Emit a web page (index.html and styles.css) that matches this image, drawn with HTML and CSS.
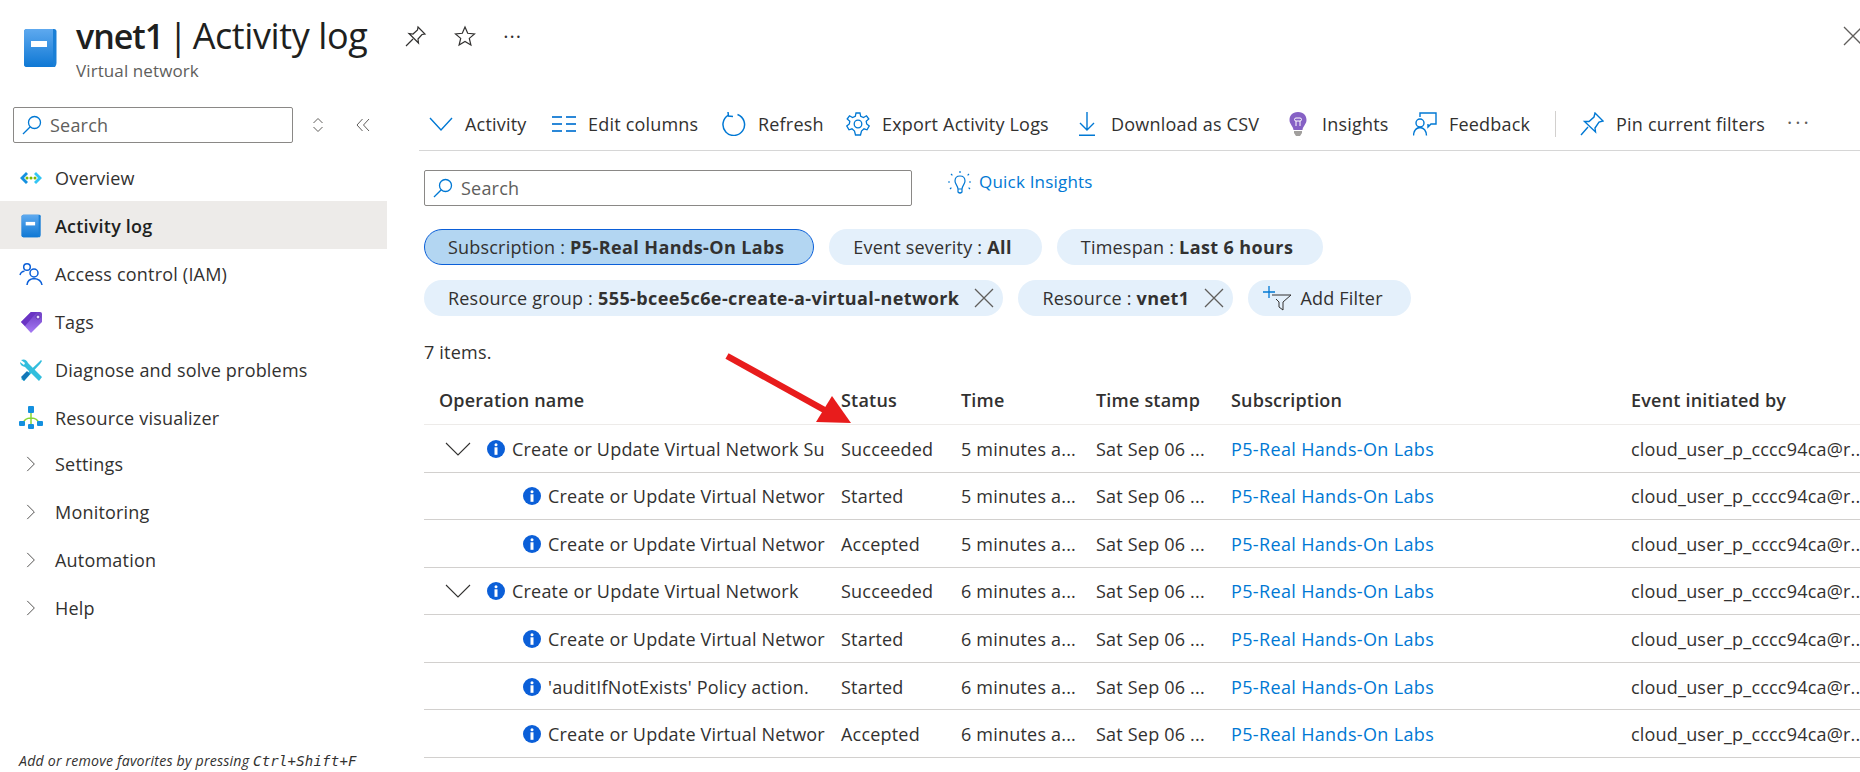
FILE: index.html
```html
<!DOCTYPE html>
<html lang="en">
<head>
  <meta charset="UTF-8">
  <title>vnet1 | Activity log</title>
  <link rel="stylesheet" href="styles.css">
</head>
<body>
  <svg class="defs" width="0" height="0">
    <defs>
      <linearGradient id="bookFill" x1="0" y1="0" x2="0" y2="1">
        <stop offset="0" stop-color="#5ea9ef"/>
        <stop offset="1" stop-color="#0f78d4"/>
      </linearGradient>
      <linearGradient id="tagFill" x1="0" y1="0" x2="0" y2="1">
        <stop offset="0" stop-color="#6f3fc4"/>
        <stop offset="1" stop-color="#a67af4"/>
      </linearGradient>
      <symbol id="book" viewBox="0 0 34 40">
        <path d="M1 4 Q1 1 4 1 H31 Q33.500 1 33.500 3.500 V35 Q33.500 37 32 39 H4 Q1 39 1 36 Z" fill="#1a7fd6"/>
        <path d="M1 4 Q1 1 4 1 H30 V37 Q30 39 28 39 H4 Q1 39 1 36 Z" fill="url(#bookFill)"/>
        <rect x="8" y="13" width="16" height="6" fill="#fff"/>
      </symbol>
      <symbol id="search" viewBox="0 0 20 20">
        <circle cx="12.500" cy="7.500" r="6" fill="none" stroke="#0078d4" stroke-width="1.300"/>
        <path d="M8.300 11.700 L1 19" fill="none" stroke="#0078d4" stroke-width="1.300"/>
      </symbol>
      <symbol id="info" viewBox="0 0 18 18">
        <circle cx="9" cy="9" r="9" fill="#0b5fd8"/>
        <circle cx="9" cy="4.800" r="1.500" fill="#fff"/>
        <rect x="7.500" y="7.300" width="3" height="7.500" fill="#fff"/>
      </symbol>
      <symbol id="chev" viewBox="0 0 12 20">
        <path d="M1.500 1.500 L10 10 L1.500 18.500" fill="none" stroke="#323130" stroke-width="1"/>
      </symbol>
      <symbol id="down" viewBox="0 0 26 14">
        <path d="M1 1 L13 13 L25 1" fill="none" stroke="#323130" stroke-width="1.100"/>
      </symbol>
      <symbol id="cross" viewBox="0 0 20 20">
        <path d="M1 1 L19 19 M19 1 L1 19" fill="none" stroke="#605e5c" stroke-width="1.300"/>
      </symbol>
    </defs>
  </svg>

  <header class="blade-head">
    <svg class="head-icon"><use href="#book"/></svg>
    <div class="head-titles">
      <h1><b>vnet1</b><span>|</span><span>Activity log</span></h1>
      <p>Virtual network</p>
    </div>
    <div class="head-actions">
      <svg width="22" height="22" viewBox="0 0 22 22" fill="none" stroke="#323130" stroke-width="1.200"><path d="M1 21 L8 14 M13 2 L20 9 L17 9.500 L13 14 L13.500 18 L4 8.500 L8 9 L12.500 5 Z"/></svg>
      <svg width="22" height="22" viewBox="0 0 22 22" fill="none" stroke="#323130" stroke-width="1.200"><path d="M11 2 L13.700 8.300 L20.500 8.900 L15.300 13.400 L16.900 20 L11 16.500 L5.100 20 L6.700 13.400 L1.500 8.900 L8.300 8.300 Z"/></svg>
      <span class="dots">&middot;&middot;&middot;</span>
    </div>
    <svg class="head-close" width="20" height="20"><use href="#cross"/></svg>
  </header>

  <div class="blade-body">
    <nav class="sidebar">
      <div class="side-tools">
        <div class="search-box side-search">
          <svg class="search-icon"><use href="#search"/></svg>
          <span>Search</span>
        </div>
        <svg width="14" height="18" viewBox="0 0 14 18" fill="none" stroke="#605e5c"><path d="M2.500 7 L7 2.500 L11.500 7 M2.500 11 L7 15.500 L11.500 11"/></svg>
        <svg width="14" height="14" viewBox="0 0 14 14" fill="none" stroke="#605e5c"><path d="M6.500 1 L1 7 L6.500 13 M13 1 L7.500 7 L13 13"/></svg>
      </div>
      <ul class="side-list">
        <li class="side-item">
          <svg class="side-icon" viewBox="0 0 24 24"><path d="M7 6 L1 12 L7 18 L9 16 L5 12 L9 8 Z" fill="#1490df"/><path d="M17 6 L23 12 L17 18 L15 16 L19 12 L15 8 Z" fill="#32c5f4"/><circle cx="8" cy="12" r="1.500" fill="#7fba00"/><circle cx="12" cy="12" r="1.500" fill="#7fba00"/><circle cx="16" cy="12" r="1.500" fill="#7fba00"/></svg>
          Overview
        </li>
        <li class="side-item active">
          <svg class="side-icon" viewBox="0 0 24 24"><use href="#book" x="2" y="0" width="20" height="24"/></svg>
          Activity log
        </li>
        <li class="side-item">
          <svg class="side-icon" viewBox="0 0 24 24" fill="none" stroke="#0b5fd8" stroke-width="1.500"><circle cx="8" cy="5" r="3.300"/><path d="M1 13 Q2 9.500 5.500 9.300"/><circle cx="15" cy="11" r="4"/><path d="M8 23 Q8.500 17 15 16.500 Q22 17 23 23"/></svg>
          Access control (IAM)
        </li>
        <li class="side-item">
          <svg class="side-icon" viewBox="0 0 24 24"><path d="M2 12 L12 2 H21 Q23 2 23 4 V12 L12 23 Z" fill="url(#tagFill)"/><path d="M2 12 L12 2 H18 L6 16 Z" fill="#6a34c4"/><circle cx="19" cy="7" r="2" fill="#e8dcff" stroke="#5c2dae"/></svg>
          Tags
        </li>
        <li class="side-item">
          <svg class="side-icon" viewBox="0 0 24 24"><path d="M2 21 L20 4 L22 2 L23 3 L21 6 L5 23 Z" fill="#32bedd"/><path d="M2 19 L8 13 L11 16 L5 23 Z" fill="#1277b8"/><path d="M2 2 Q7 0 9 5 L23 19 L20 23 L6 9 Q1 8 1 4 L5 7 L6 5 Z" fill="#32bedd"/></svg>
          Diagnose and solve problems
        </li>
        <li class="side-item side-last">
          <svg class="side-icon" viewBox="0 0 24 24"><path d="M12 7 V19 M4 18 Q5 12 12 12 Q19 12 20 18" fill="none" stroke="#86d633" stroke-width="1.500"/><rect x="9" y="0" width="6" height="7" rx="1" fill="#1490df"/><rect x="0" y="15" width="6" height="5" rx="1" fill="#1490df"/><rect x="18" y="15" width="6" height="5" rx="1" fill="#1490df"/><rect x="9" y="18" width="6" height="5" rx="1" fill="#1490df"/></svg>
          Resource visualizer
        </li>
        <li class="side-item group"><svg class="side-chev"><use href="#chev"/></svg>Settings</li>
        <li class="side-item group"><svg class="side-chev"><use href="#chev"/></svg>Monitoring</li>
        <li class="side-item group"><svg class="side-chev"><use href="#chev"/></svg>Automation</li>
        <li class="side-item group"><svg class="side-chev"><use href="#chev"/></svg>Help</li>
      </ul>
      <p class="side-foot">Add or remove favorites by pressing <kbd>Ctrl+Shift+F</kbd></p>
    </nav>

    <main class="content">
      <div class="toolbar">
        <div class="tool">
          <svg class="tool-icon" viewBox="0 0 24 24" fill="none" stroke="#0078d4" stroke-width="1.400"><path d="M1 6 L12 18 L23 6"/></svg>
          Activity
        </div>
        <div class="tool">
          <svg class="tool-icon" viewBox="0 0 24 24" stroke="#2b88d8" stroke-width="2"><path d="M0 5 H10 M14 5 H24 M0 12 H10 M14 12 H24 M0 19 H10 M14 19 H24"/></svg>
          Edit columns
        </div>
        <div class="tool">
          <svg class="tool-icon" viewBox="0 0 24 24" fill="none" stroke="#0078d4" stroke-width="1.500"><path d="M15.500 2.500 A10.800 10.800 0 1 1 6.500 3.200"/><path d="M6 0 L6.500 4 L11 4.500"/></svg>
          Refresh
        </div>
        <div class="tool">
          <svg class="tool-icon" viewBox="0 0 24 24" fill="none" stroke="#0078d4" stroke-width="1.300"><circle cx="12" cy="12" r="3.800"/><path d="M10 1 H14 L14.700 4.300 L17.500 5.500 L20.500 3.800 L22.800 7 L20.200 9.200 L20.700 12 L23.200 14 L21 17.800 L18 16.800 L15.500 19 L14.500 23 H9.500 L8.500 19 L6 16.800 L3 17.800 L0.800 14 L3.300 12 L3.800 9.200 L1.200 7 L3.500 3.800 L6.500 5.500 L9.300 4.300 Z"/></svg>
          Export Activity Logs
        </div>
        <div class="tool">
          <svg class="tool-icon" viewBox="0 0 24 24" fill="none" stroke="#0078d4" stroke-width="1.400"><path d="M12 0 V18 M5 11 L12 18 L19 11 M4 23.300 H20"/></svg>
          Download as CSV
        </div>
        <div class="tool">
          <svg class="tool-icon" viewBox="0 0 24 24"><path d="M12 0 C6 0 3.500 4 3.500 8 C3.500 12 7 14 7.500 18 H16.500 C17 14 20.500 12 20.500 8 C20.500 4 18 0 12 0 Z" fill="#8661c5"/><path d="M8 19 H16 V21 L14 24 H10 L8 21 Z" fill="#a19f9d"/><path d="M10 9 V14 M14 9 V14 M10 9 A1.500 1.500 0 1 1 10 6 H14 A1.500 1.500 0 1 1 14 9 Z" fill="none" stroke="#fff"/></svg>
          Insights
        </div>
        <div class="tool">
          <svg class="tool-icon" viewBox="0 0 24 24" fill="none" stroke="#0078d4" stroke-width="1.400"><path d="M7 5 V1 H23 V12 H18 L15 15 V12"/><circle cx="7" cy="11" r="4"/><path d="M0.500 23.500 Q1 16 7 15.500 Q13 16 13.500 23.500"/></svg>
          Feedback
        </div>
        <div class="tool-sep"></div>
        <div class="tool">
          <svg class="tool-icon" viewBox="0 0 24 24" fill="none" stroke="#0078d4" stroke-width="1.400"><path d="M1 23 L8 15 M15 1 L23 9 L19 10 L15 16 L15.500 20 L4.500 9.500 L9 9.500 L14 5 Z"/></svg>
          Pin current filters
        </div>
        <span class="dots tool-more">&middot;&middot;&middot;</span>
      </div>

      <div class="panel">
        <div class="search-row">
          <div class="search-box main-search">
            <svg class="search-icon"><use href="#search"/></svg>
            <span>Search</span>
          </div>
          <a class="quick-link">
            <svg width="26" height="26" viewBox="0 0 26 26" fill="none" stroke="#0078d4" stroke-width="1.200"><path d="M13 6 C9.500 6 8 8.500 8 11 C8 14 10.500 15 11 19 H15 C15.500 15 18 14 18 11 C18 8.500 16.500 6 13 6 Z M11 19 V22 Q13 24 15 22 V19"/><path stroke-dasharray="2 2" d="M13 1 V4 M4 4 L6 6 M22 4 L20 6 M1 12 H4 M22 12 H25 M3 19 L5 17 M23 19 L21 17"/></svg>
            <span>Quick Insights</span>
          </a>
        </div>

        <div class="chip-row">
          <span class="chip selected">Subscription : <b>P5-Real Hands-On Labs</b></span>
          <span class="chip">Event severity : <b>All</b></span>
          <span class="chip">Timespan : <b>Last 6 hours</b></span>
        </div>
        <div class="chip-row">
          <span class="chip closable">Resource group : <b>555-bcee5c6e-create-a-virtual-network</b><svg class="chip-x"><use href="#cross"/></svg></span>
          <span class="chip closable">Resource : <b>vnet1</b><svg class="chip-x"><use href="#cross"/></svg></span>
          <span class="chip add-chip">
            <svg width="30" height="26" viewBox="0 0 30 26" fill="none" stroke="#0078d4" stroke-width="1.300"><path d="M6 1 V13 M0 7 H12"/><path d="M9 10 H28 L20 17 V25 L16 22 V17 L13 14" stroke="#323130" stroke-width="1"/></svg>
            Add Filter
          </span>
        </div>

        <p class="count">7 items.</p>

        <div class="log-table">
          <div class="log-row log-head">
            <div>Operation name</div><div>Status</div><div>Time</div><div>Time stamp</div><div>Subscription</div><div>Event initiated by</div>
          </div>
          <div class="log-row">
            <div class="op parent"><svg class="op-toggle"><use href="#down"/></svg><svg class="op-info"><use href="#info"/></svg><span>Create or Update Virtual Network Su</span></div>
            <div>Succeeded</div><div>5 minutes a...</div><div>Sat Sep 06 ...</div><div><a class="sub-link">P5-Real Hands-On Labs</a></div><div>cloud_user_p_cccc94ca@r..</div>
          </div>
          <div class="log-row">
            <div class="op child"><svg class="op-info"><use href="#info"/></svg><span>Create or Update Virtual Networ</span></div>
            <div>Started</div><div>5 minutes a...</div><div>Sat Sep 06 ...</div><div><a class="sub-link">P5-Real Hands-On Labs</a></div><div>cloud_user_p_cccc94ca@r..</div>
          </div>
          <div class="log-row">
            <div class="op child"><svg class="op-info"><use href="#info"/></svg><span>Create or Update Virtual Networ</span></div>
            <div>Accepted</div><div>5 minutes a...</div><div>Sat Sep 06 ...</div><div><a class="sub-link">P5-Real Hands-On Labs</a></div><div>cloud_user_p_cccc94ca@r..</div>
          </div>
          <div class="log-row">
            <div class="op parent"><svg class="op-toggle"><use href="#down"/></svg><svg class="op-info"><use href="#info"/></svg><span>Create or Update Virtual Network</span></div>
            <div>Succeeded</div><div>6 minutes a...</div><div>Sat Sep 06 ...</div><div><a class="sub-link">P5-Real Hands-On Labs</a></div><div>cloud_user_p_cccc94ca@r..</div>
          </div>
          <div class="log-row">
            <div class="op child"><svg class="op-info"><use href="#info"/></svg><span>Create or Update Virtual Networ</span></div>
            <div>Started</div><div>6 minutes a...</div><div>Sat Sep 06 ...</div><div><a class="sub-link">P5-Real Hands-On Labs</a></div><div>cloud_user_p_cccc94ca@r..</div>
          </div>
          <div class="log-row">
            <div class="op child"><svg class="op-info"><use href="#info"/></svg><span>'auditIfNotExists' Policy action.</span></div>
            <div>Started</div><div>6 minutes a...</div><div>Sat Sep 06 ...</div><div><a class="sub-link">P5-Real Hands-On Labs</a></div><div>cloud_user_p_cccc94ca@r..</div>
          </div>
          <div class="log-row">
            <div class="op child"><svg class="op-info"><use href="#info"/></svg><span>Create or Update Virtual Networ</span></div>
            <div>Accepted</div><div>6 minutes a...</div><div>Sat Sep 06 ...</div><div><a class="sub-link">P5-Real Hands-On Labs</a></div><div>cloud_user_p_cccc94ca@r..</div>
          </div>
        </div>
      </div>
    </main>
  </div>

  <!-- red annotation arrow drawn over the table -->
  <svg class="arrow" width="140" height="80" viewBox="0 0 140 80">
    <path d="M3 3 L104 59" stroke="#e81c1c" stroke-width="6.500" fill="none"/>
    <path d="M108 43 L92 69 L127 70 Z" fill="#e81c1c"/>
  </svg>
</body>
</html>
```

FILE: styles.css
```css
* {
  box-sizing: border-box;
}
html,
body {
  margin: 0;
  height: 772px;
  overflow: hidden;
}
body {
  position: relative;
  background: #fff;
  color: #323130;
  font-family: "Open Sans", "Noto Sans", Arial, sans-serif;
  font-size: 18px;
  letter-spacing: 0.2px;
}
.defs {
  position: absolute;
}
b {
  font-weight: 700;
  letter-spacing: 0.4px;
}

/* blade header */
.blade-head {
  display: flex;
  height: 98px;
  padding: 14px 0 0 23px;
  position: relative;
}
.head-icon {
  width: 34px;
  height: 40px;
  margin-top: 14px;
}
.head-titles {
  margin-left: 19px;
}
h1 {
  display: flex;
  align-items: baseline;
  gap: 5px;
  margin: 0;
  font-size: 36px;
  line-height: 44px;
  font-weight: 400;
  color: #201f1e;
  white-space: nowrap;
  letter-spacing: -0.4px;
}
h1 b {
  font-size: 34px;
  font-weight: 600;
  letter-spacing: -1px;
}
.head-titles p {
  margin: 1px 0 0;
  font-size: 17px;
  line-height: 24px;
  letter-spacing: 0.1px;
  color: #605e5c;
}
.head-actions {
  display: flex;
  align-items: center;
  gap: 27px;
  height: 44px;
  margin-left: 38px;
}
.dots {
  font-size: 20px;
  letter-spacing: 1px;
  color: #323130;
}
.head-close {
  position: absolute;
  right: -3px;
  top: 26px;
}

.blade-body {
  display: grid;
  grid-template-columns: 387px 1fr;
  height: 674px;
}

/* left menu */
.sidebar {
  display: flex;
  flex-direction: column;
  padding-top: 9px;
}
.side-tools {
  display: flex;
  align-items: center;
  gap: 18px;
  padding-left: 13px;
  margin-bottom: 10px;
}
.side-tools svg:last-child {
  margin-left: 13px;
}
.search-box {
  display: flex;
  align-items: center;
  height: 36px;
  border: 1px solid #8a8886;
  border-radius: 2px;
  color: #605e5c;
  line-height: 32px;
}
.side-search {
  width: 280px;
}
.search-icon {
  width: 20px;
  height: 20px;
  margin: 0 8px 0 8px;
}
.side-list {
  list-style: none;
  margin: 0;
  padding: 0;
}
.side-item {
  display: flex;
  align-items: center;
  gap: 12px;
  height: 48px;
  padding: 2px 0 0 19px;
  white-space: nowrap;
}
.side-item.active {
  background: #edebe9;
  font-weight: 600;
  color: #201f1e;
}
.side-item.side-last {
  margin-bottom: -2px;
}
.side-item.group {
  gap: 19px;
  padding-left: 26px;
}
.side-icon {
  width: 24px;
  height: 24px;
  flex: none;
}
.side-chev {
  width: 10px;
  height: 18px;
  flex: none;
}
.side-foot {
  margin: auto 0 0;
  padding: 0 0 1px 19px;
  font-size: 14.150px;
  line-height: 20px;
  font-style: italic;
  white-space: nowrap;
}
kbd {
  font-family: "DejaVu Sans Mono", monospace;
  font-size: 14px;
  font-style: italic;
}

/* right side */
.content {
  margin-left: 32px;
  min-width: 0;
}
.toolbar {
  display: grid;
  grid-template-columns: 123px 170px 124px 229px 211px 127px 142px 25px 207px auto;
  align-items: center;
  height: 53px;
  padding-left: 10px;
  border-bottom: 1px solid #d6d6d6;
}
.tool {
  display: flex;
  align-items: center;
  gap: 12px;
  white-space: nowrap;
}
.tool-icon {
  width: 24px;
  height: 24px;
  flex: none;
}
.tool-sep {
  width: 1px;
  height: 26px;
  background: #d2d0ce;
}
.tool-more {
  letter-spacing: 3px;
  margin-top: -3px;
  color: #605e5c;
}
.panel {
  padding: 19px 0 0 5px;
}
.search-row {
  display: flex;
  align-items: flex-start;
  gap: 35px;
  margin-bottom: 23px;
}
.main-search {
  width: 488px;
}
.quick-link {
  display: flex;
  align-items: center;
  gap: 6px;
  height: 26px;
  color: #0078d4;
  font-size: 17px;
}
.quick-link span {
  margin-top: -4px;
}
.chip-row {
  display: flex;
  gap: 15px;
  margin-bottom: 15px;
}
.chip {
  display: flex;
  align-items: center;
  gap: 5px;
  height: 36px;
  padding: 0 29px 0 23px;
  border: 1px solid transparent;
  border-radius: 18px;
  background: #e4f0fb;
  white-space: nowrap;
}
.chip.selected {
  background: #b3d6f2;
  border-color: #0b5fd8;
}
.chip.closable {
  padding-right: 8px;
}
.chip-x {
  width: 20px;
  height: 20px;
  margin-left: 10px;
}
.add-chip {
  padding: 0 27px 0 14px;
  gap: 7px;
}
.count {
  margin: 0;
  height: 24px;
  line-height: 24px;
  margin-top: 24px;
  margin-bottom: 12px;
}

/* activity table */
.log-row {
  display: grid;
  grid-template-columns: 402px 120px 135px 135px 400px 224px;
  align-items: center;
  height: 47.57px;
  padding: 1px 0 0 15px;
  border-bottom: 1px solid #d2d0ce;
  white-space: nowrap;
}
.log-head {
  height: 49px;
  padding: 0 0 1px 15px;
  border-bottom-color: #edebe9;
  font-weight: 600;
}
.op {
  display: flex;
  align-items: center;
  min-width: 0;
  margin-right: 15px;
}
.op.parent {
  padding-left: 6px;
}
.op.child {
  padding-left: 84px;
}
.op-toggle {
  width: 26px;
  height: 14px;
  flex: none;
  margin-right: 16px;
}
.op-info {
  width: 18px;
  height: 18px;
  flex: none;
  margin-right: 7px;
}
.sub-link {
  color: #0078d4;
  letter-spacing: 0.35px;
}

.arrow {
  position: absolute;
  left: 724px;
  top: 353px;
}
```
